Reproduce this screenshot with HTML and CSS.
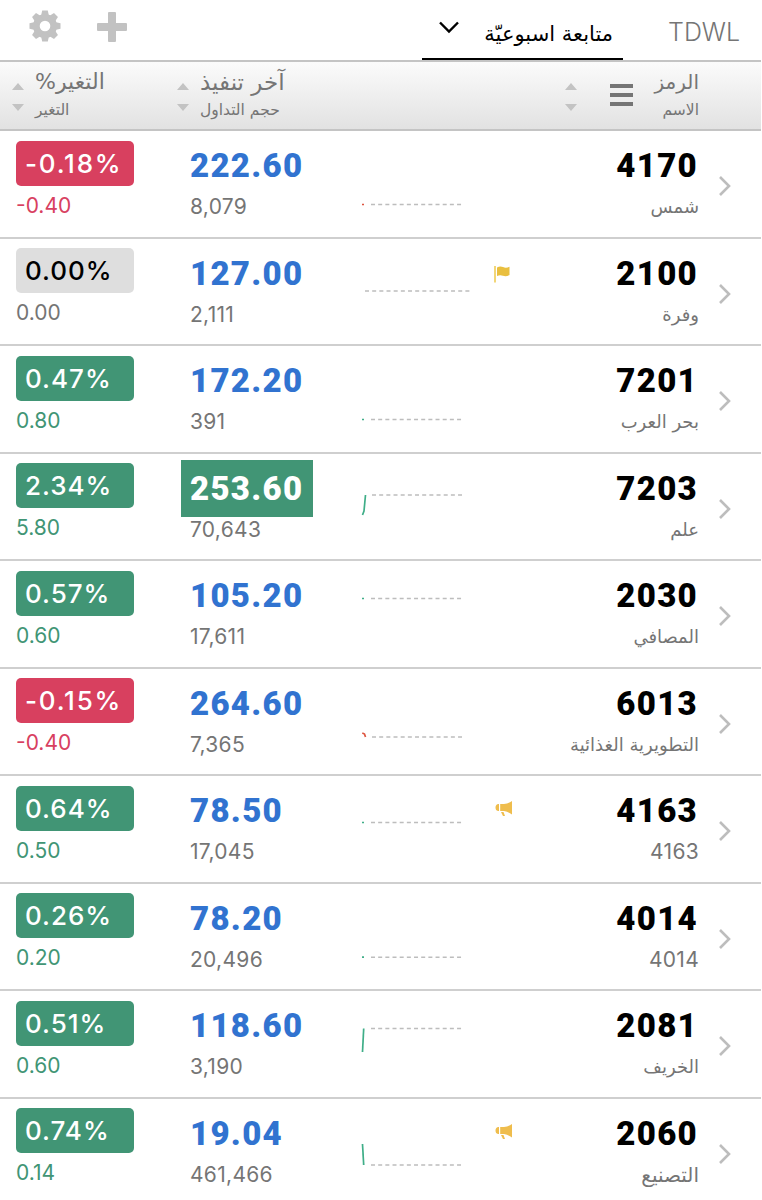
FILE: index.html
```html
<!DOCTYPE html>
<html lang="ar">
<head>
  <meta charset="UTF-8">
  <title>متابعة اسبوعيّة</title>
  <link rel="stylesheet" href="styles.css">
</head>
<body>
  <!-- Shared icons -->
  <svg class="defs" xmlns="http://www.w3.org/2000/svg">
    <symbol id="chevron" viewBox="0 0 14 22">
      <path d="M2 2 L11 11 L2 20" fill="none" stroke="#bdbdbd" stroke-width="2.6"/>
    </symbol>
    <symbol id="sort" viewBox="0 0 12 28">
      <path d="M0 7 L6 0 L12 7 Z M0 21 L12 21 L6 28 Z" fill="#c3c3c3"/>
    </symbol>
    <symbol id="flag" viewBox="0 0 17 18">
      <path d="M1 1 V17.5" stroke="#eec84a" stroke-width="1.5"/>
      <path d="M3 2.5 Q6 0.6 9 2 T15.5 1.7 V10 Q12 12 9 10.8 T3 11 Z" fill="#e9bf3f"/>
    </symbol>
    <symbol id="horn" viewBox="0 0 18 17">
      <path d="M4 4 V11 H3 Q0.5 10.5 0.5 7.5 T3 4 Z M5.2 4 H9 Q13 3.5 17 1 V14.5 Q13 11.5 9 11 H5.2 Z M6 12 H8.5 L10 16 H8 Z" fill="#efbd4d"/>
    </symbol>
  </svg>

  <div class="toolbar">
    <svg class="gear" viewBox="-16 -16 32 32">
      <g fill="#c2c2c2">
        <circle r="12"/>
        <path d="M-4 -10 L-2.8 -15.5 H2.8 L4 -10 V10 L2.8 15.5 H-2.8 L-4 10 Z"/>
        <path d="M-4 -10 L-2.8 -15.5 H2.8 L4 -10 V10 L2.8 15.5 H-2.8 L-4 10 Z" transform="rotate(45)"/>
        <path d="M-4 -10 L-2.8 -15.5 H2.8 L4 -10 V10 L2.8 15.5 H-2.8 L-4 10 Z" transform="rotate(90)"/>
        <path d="M-4 -10 L-2.8 -15.5 H2.8 L4 -10 V10 L2.8 15.5 H-2.8 L-4 10 Z" transform="rotate(135)"/>
      </g>
      <circle r="5.3" fill="#fff"/>
    </svg>
    <svg class="plus" viewBox="0 0 30 30">
      <path d="M12 0 H18 Q19 0 19 1 V11 H29 Q30 11 30 12 V18 Q30 19 29 19 H19 V29 Q19 30 18 30 H12 Q11 30 11 29 V19 H1 Q0 19 0 18 V12 Q0 11 1 11 H11 V1 Q11 0 12 0 Z" fill="#c2c2c2"/>
    </svg>
    <div class="list-tab">
      <svg class="caret" viewBox="0 0 20 13"><path d="M1 1.5 L10 10.5 L19 1.5" fill="none" stroke="#000" stroke-width="2.4"/></svg>
      <span class="list-name" dir="rtl">متابعة اسبوعيّة</span>
    </div>
    <span class="market">TDWL</span>
  </div>

  <div class="head">
    <svg class="sort"><use href="#sort"/></svg>
    <div class="titles change-title">
      <div class="title"><span>%</span><span>التغير</span></div>
      <div class="subtitle">التغير</div>
    </div>
    <svg class="sort"><use href="#sort"/></svg>
    <div class="titles last-title">
      <div class="title">آخر تنفيذ</div>
      <div class="subtitle">حجم التداول</div>
    </div>
    <svg class="sort"><use href="#sort"/></svg>
    <div class="menu"><i></i><i></i><i></i></div>
    <div class="titles symbol-title">
      <div class="title">الرمز</div>
      <div class="subtitle">الاسم</div>
    </div>
  </div>

  <div class="row down">
    <div class="change"><div class="pct">-0.18%</div><div class="diff">-0.40</div></div>
    <div class="last"><div class="price">222.60</div><div class="volume">8,079</div></div>
    <svg class="chart"><path class="base" d="M11 73.5 H102"/><path class="dot" d="M2 73.5 h2"/></svg>
    <div class="mark"></div>
    <div class="symbol"><div class="code">4170</div><div class="name">شمس</div></div>
    <svg class="go"><use href="#chevron"/></svg>
  </div>

  <div class="row flat">
    <div class="change"><div class="pct">0.00%</div><div class="diff">0.00</div></div>
    <div class="last"><div class="price">127.00</div><div class="volume">2,111</div></div>
    <svg class="chart"><path class="base" d="M5 52 H110"/></svg>
    <div class="mark"><svg class="flag"><use href="#flag"/></svg></div>
    <div class="symbol"><div class="code">2100</div><div class="name">وفرة</div></div>
    <svg class="go"><use href="#chevron"/></svg>
  </div>

  <div class="row up">
    <div class="change"><div class="pct">0.47%</div><div class="diff">0.80</div></div>
    <div class="last"><div class="price">172.20</div><div class="volume">391</div></div>
    <svg class="chart"><path class="base" d="M11 73.5 H102"/><path class="dot" d="M2 73.5 h2"/></svg>
    <div class="mark"></div>
    <div class="symbol"><div class="code">7201</div><div class="name">بحر العرب</div></div>
    <svg class="go"><use href="#chevron"/></svg>
  </div>

  <div class="row up">
    <div class="change"><div class="pct">2.34%</div><div class="diff">5.80</div></div>
    <div class="last"><div class="price flash">253.60</div><div class="volume">70,643</div></div>
    <svg class="chart"><path class="base" d="M12 41 H103"/><path class="line" d="M5.5 41 L4 57 L2.5 61"/></svg>
    <div class="mark"></div>
    <div class="symbol"><div class="code">7203</div><div class="name">علم</div></div>
    <svg class="go"><use href="#chevron"/></svg>
  </div>

  <div class="row up">
    <div class="change"><div class="pct">0.57%</div><div class="diff">0.60</div></div>
    <div class="last"><div class="price">105.20</div><div class="volume">17,611</div></div>
    <svg class="chart"><path class="base" d="M11 37.5 H102"/><path class="dot" d="M2 37.5 h2"/></svg>
    <div class="mark"></div>
    <div class="symbol"><div class="code">2030</div><div class="name">المصافي</div></div>
    <svg class="go"><use href="#chevron"/></svg>
  </div>

  <div class="row down">
    <div class="change"><div class="pct">-0.15%</div><div class="diff">-0.40</div></div>
    <div class="last"><div class="price">264.60</div><div class="volume">7,365</div></div>
    <svg class="chart"><path class="base" d="M12 68 H103"/><path class="line" d="M2.3 64 L4.5 65 L5.5 68"/></svg>
    <div class="mark"></div>
    <div class="symbol"><div class="code">6013</div><div class="name">التطويرية الغذائية</div></div>
    <svg class="go"><use href="#chevron"/></svg>
  </div>

  <div class="row up">
    <div class="change"><div class="pct">0.64%</div><div class="diff">0.50</div></div>
    <div class="last"><div class="price">78.50</div><div class="volume">17,045</div></div>
    <svg class="chart"><path class="base" d="M11 46.5 H102"/><path class="dot" d="M2 46.5 h2"/></svg>
    <div class="mark"><svg class="horn"><use href="#horn"/></svg></div>
    <div class="symbol"><div class="code">4163</div><div class="name num">4163</div></div>
    <svg class="go"><use href="#chevron"/></svg>
  </div>

  <div class="row up">
    <div class="change"><div class="pct">0.26%</div><div class="diff">0.20</div></div>
    <div class="last"><div class="price">78.20</div><div class="volume">20,496</div></div>
    <svg class="chart"><path class="base" d="M11 73.2 H102"/><path class="dot" d="M2 73.2 h2"/></svg>
    <div class="mark"></div>
    <div class="symbol"><div class="code">4014</div><div class="name num">4014</div></div>
    <svg class="go"><use href="#chevron"/></svg>
  </div>

  <div class="row up">
    <div class="change"><div class="pct">0.51%</div><div class="diff">0.60</div></div>
    <div class="last"><div class="price">118.60</div><div class="volume">3,190</div></div>
    <svg class="chart"><path class="base" d="M11 37.5 H102"/><path class="line" d="M3.7 37.5 L2.5 61"/></svg>
    <div class="mark"></div>
    <div class="symbol"><div class="code">2081</div><div class="name">الخريف</div></div>
    <svg class="go"><use href="#chevron"/></svg>
  </div>

  <div class="row up">
    <div class="change"><div class="pct">0.74%</div><div class="diff">0.14</div></div>
    <div class="last"><div class="price">19.04</div><div class="volume">461,466</div></div>
    <svg class="chart"><path class="base" d="M11 66 H102"/><path class="line" d="M2.5 45 L3.7 66"/></svg>
    <div class="mark"><svg class="horn"><use href="#horn"/></svg></div>
    <div class="symbol"><div class="code">2060</div><div class="name wide">التصنيع</div></div>
    <svg class="go"><use href="#chevron"/></svg>
  </div>
</body>
</html>
```
FILE: styles.css
```css
body {
  margin: 0;
  width: 761px;
  height: 1200px;
  overflow: hidden;
  background: #fff;
  font-family: Inter, "DejaVu Sans", sans-serif;
  color: #757575;
}
svg {
  display: block;
}
.defs {
  display: none;
}

/* top bar */
.toolbar {
  display: flex;
  height: 60px;
  padding-left: 29px;
  box-sizing: border-box;
}
.gear {
  width: 32px;
  height: 32px;
  margin-top: 10px;
}
.plus {
  width: 30px;
  height: 30px;
  margin: 12px 0 0 36px;
}
.list-tab {
  display: flex;
  width: 201px;
  height: 60px;
  margin-left: 295px;
  box-sizing: border-box;
  border-bottom: 2px solid #000;
  padding: 0 10px 0 17px;
  justify-content: space-between;
}
.caret {
  width: 20px;
  height: 13px;
  margin-top: 21px;
}
.list-name {
  font-family: "DejaVu Sans", sans-serif;
  font-size: 21px;
  line-height: 30px;
  margin-top: 19px;
  color: #000;
  white-space: nowrap;
}
.market {
  font-size: 25px;
  line-height: 30px;
  margin: 17px 0 0 45px;
  font-weight: 300;
}

/* column titles */
.head {
  display: flex;
  height: 71.4px;
  box-sizing: border-box;
  border-top: 2px solid #c4c4c4;
  border-bottom: 2px solid #c4c4c4;
  background: linear-gradient(#fbfbfb, #e2e2e2);
  padding-left: 12px;
}
.sort {
  width: 12px;
  height: 28px;
  margin-top: 21px;
}
.titles {
  font-family: "DejaVu Sans", sans-serif;
  white-space: nowrap;
  padding-top: 7px;
}
.title {
  font-size: 22px;
  line-height: 26px;
}
.subtitle {
  font-size: 15.5px;
  line-height: 30px;
}
.change-title {
  width: 142px;
  margin-left: 11px;
}
.last-title {
  width: 365px;
  margin-left: 11px;
}
.last-title .title {
  font-size: 23px;
}
.symbol-title {
  width: 66px;
  text-align: right;
}
.symbol-title .title {
  font-size: 20px;
}
.menu {
  margin: 22px 0 0 33px;
}
.menu i {
  display: block;
  width: 23px;
  height: 4px;
  margin-bottom: 5px;
  background: #757575;
}

/* quotes */
.row {
  display: flex;
  height: 107.5px;
  box-sizing: border-box;
  border-bottom: 2px solid #cfcfcf;
  padding-left: 16px;
}
.change {
  width: 165px;
  padding-top: 9.4px;
}
.pct {
  width: 118px;
  height: 45px;
  box-sizing: border-box;
  padding-left: 9px;
  border-radius: 5px;
  font-size: 26px;
  font-weight: 450;
  line-height: 45px;
  letter-spacing: 1px;
  color: #fff;
}
.diff,
.volume {
  font-size: 21px;
  line-height: 26px;
}
.diff {
  margin-top: 7px;
}
.up .pct,
.flash {
  background: #419575;
}
.up .diff {
  color: #419575;
}
.down .pct {
  background: #d8405f;
  letter-spacing: 1.8px;
}
.down .diff {
  color: #d8405f;
}
.flat .pct {
  background: #dedede;
  color: #000;
}
.last {
  width: 179px;
  padding-top: 6px;
}
.price {
  width: 132px;
  height: 57px;
  box-sizing: border-box;
  padding-left: 9px;
  font: 900 33px/57px Roboto, sans-serif;
  letter-spacing: 1.3px;
  color: #3173d0;
}
.price.flash {
  color: #fff;
}
.volume {
  margin-left: 9px;
  letter-spacing: 0.3px;
}
.chart {
  width: 120px;
  height: 105px;
  fill: none;
}
.base {
  stroke: #bdbdbd;
  stroke-width: 1.5;
  stroke-dasharray: 4 3.17;
}
.dot,
.line {
  stroke: #3fae88;
  stroke-width: 1.7;
}
.down .dot,
.down .line {
  stroke: #dd5540;
}
.mark {
  width: 60px;
  padding: 26px 0 0 14px;
  box-sizing: border-box;
}
.flag {
  width: 17px;
  height: 18px;
}
.horn {
  width: 18px;
  height: 17px;
  margin: -2px 0 0 1px;
}
.symbol {
  width: 159px;
  text-align: right;
  padding-top: 6px;
}
.code {
  font: 900 33px/57px Roboto, sans-serif;
  letter-spacing: 1.3px;
  margin-right: 1px;
  color: #000;
}
.name {
  font-family: "DejaVu Sans", sans-serif;
  font-size: 18px;
  line-height: 26px;
  white-space: nowrap;
}
.name.wide {
  font-size: 20px;
}
.name.num {
  font-family: Inter, sans-serif;
  font-size: 21px;
  letter-spacing: 0.3px;
}
.go {
  width: 14px;
  height: 22px;
  margin: 44px 0 0 19px;
}
```
